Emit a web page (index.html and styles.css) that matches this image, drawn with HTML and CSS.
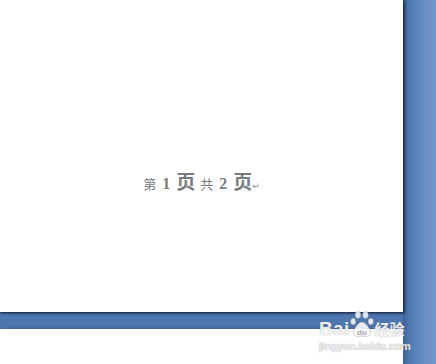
FILE: index.html
```html
<!DOCTYPE html>
<html>
<head>
<meta charset="utf-8">
<link rel="stylesheet" href="styles.css">
</head>
<body>
<div class="desk">
  <div class="col">
    <div class="page page-top">
      <p class="footer"><span class="cj">第</span><span class="num">1</span><span class="big">页</span><span class="cj">共</span><span class="num">2</span><span class="big">页</span><span class="ret">↵</span></p>
    </div>
    <div class="band"></div>
    <div class="page page-bottom"></div>
  </div>
  <div class="side"></div>
</div>
<div class="mark">
  <div class="mark-top">
    <span class="bai">Bai</span>
    <svg class="paw" width="24" height="27" viewBox="0 0 24 27">
      <g fill="rgba(255,255,255,0.85)" stroke="rgba(140,140,140,0.55)" stroke-width="0.8">
        <ellipse cx="8" cy="4" rx="2.8" ry="3.4"/>
        <ellipse cx="15.5" cy="4" rx="2.8" ry="3.4"/>
        <ellipse cx="3.2" cy="10.5" rx="2.6" ry="3.2"/>
        <ellipse cx="20.8" cy="10.5" rx="2.6" ry="3.2"/>
        <path d="M12 11 C8 11 3 19 3.5 22.5 C4 26 9 25.5 12 25 C15 25.5 20 26 20.5 22.5 C21 19 16 11 12 11Z"/>
      </g>
      <text x="12" y="23.5" font-size="8" font-family="Liberation Sans, sans-serif" font-weight="bold" text-anchor="middle" fill="rgba(150,150,150,0.6)">du</text>
    </svg>
    <span class="jy">经验</span>
  </div>
  <div class="mark-url">jingyan.baidu.com</div>
</div>
</body>
</html>
```
FILE: styles.css
```css
html, body {
  margin: 0;
  padding: 0;
  width: 436px;
  height: 364px;
  overflow: hidden;
  background: #5a80b7;
}
.desk {
  display: flex;
  width: 436px;
  height: 364px;
}
.col {
  width: 403px;
  display: flex;
  flex-direction: column;
}
.page {
  background: #fff;
}
.page-top {
  height: 312px;
  box-shadow: 1px 1px 2px rgba(20, 30, 50, 0.85), 2px 0 3px rgba(20, 30, 50, 0.4);
  position: relative;
  z-index: 1;
  display: flex;
  justify-content: center;
  align-items: flex-start;
}
.band {
  height: 17px;
  background: linear-gradient(to bottom, #3f6396 0, #4d74ac 3px, #5179b1 100%);
}
.page-bottom {
  flex: 1;
  box-shadow: 2px 0 3px rgba(20, 30, 50, 0.5);
}
.side {
  flex: 1;
  background: linear-gradient(to right, #3e5f90 0, #4a70a8 4px, #5a82bb 12px, #6a90c6 24px, #7097cc 33px);
}
.footer {
  margin: 171px 0 0 0;
  display: flex;
  align-items: baseline;
  color: #777b80;
  line-height: 20px;
}
.cj {
  font-family: "Noto Sans CJK SC", sans-serif;
  font-size: 13px;
  margin-right: 6px;
}
.num {
  font-family: "Liberation Serif", serif;
  font-weight: bold;
  font-size: 16px;
  margin-right: 6px;
}
.big {
  font-family: "Noto Sans CJK SC", sans-serif;
  font-weight: bold;
  font-size: 19px;
  margin-right: 5px;
}
.big + .ret {
  margin-left: -5px;
}
.ret {
  font-family: "DejaVu Sans", sans-serif;
  font-size: 9px;
  color: #8a8f98;
}
.mark {
  position: absolute;
  left: 319px;
  top: 311px;
  width: 90px;
  z-index: 2;
  color: rgba(255, 255, 255, 0.9);
  font-family: "Liberation Sans", sans-serif;
  text-shadow: 0 0 1px rgba(110, 110, 110, 0.7);
}
.mark-top {
  display: flex;
  align-items: flex-end;
  height: 27px;
}
.bai {
  font-size: 19px;
  font-weight: bold;
  line-height: 18px;
  letter-spacing: 0.3px;
}
.paw {
  margin-left: 1px;
}
.jy {
  font-family: "Noto Sans CJK SC", sans-serif;
  font-size: 15px;
  font-weight: bold;
  line-height: 18px;
  margin-left: 0;
}
.mark-url {
  font-size: 11px;
  font-weight: bold;
  margin-top: 2px;
  line-height: 12px;
  letter-spacing: -0.3px;
  color: rgba(245, 245, 250, 0.9);
}
```
